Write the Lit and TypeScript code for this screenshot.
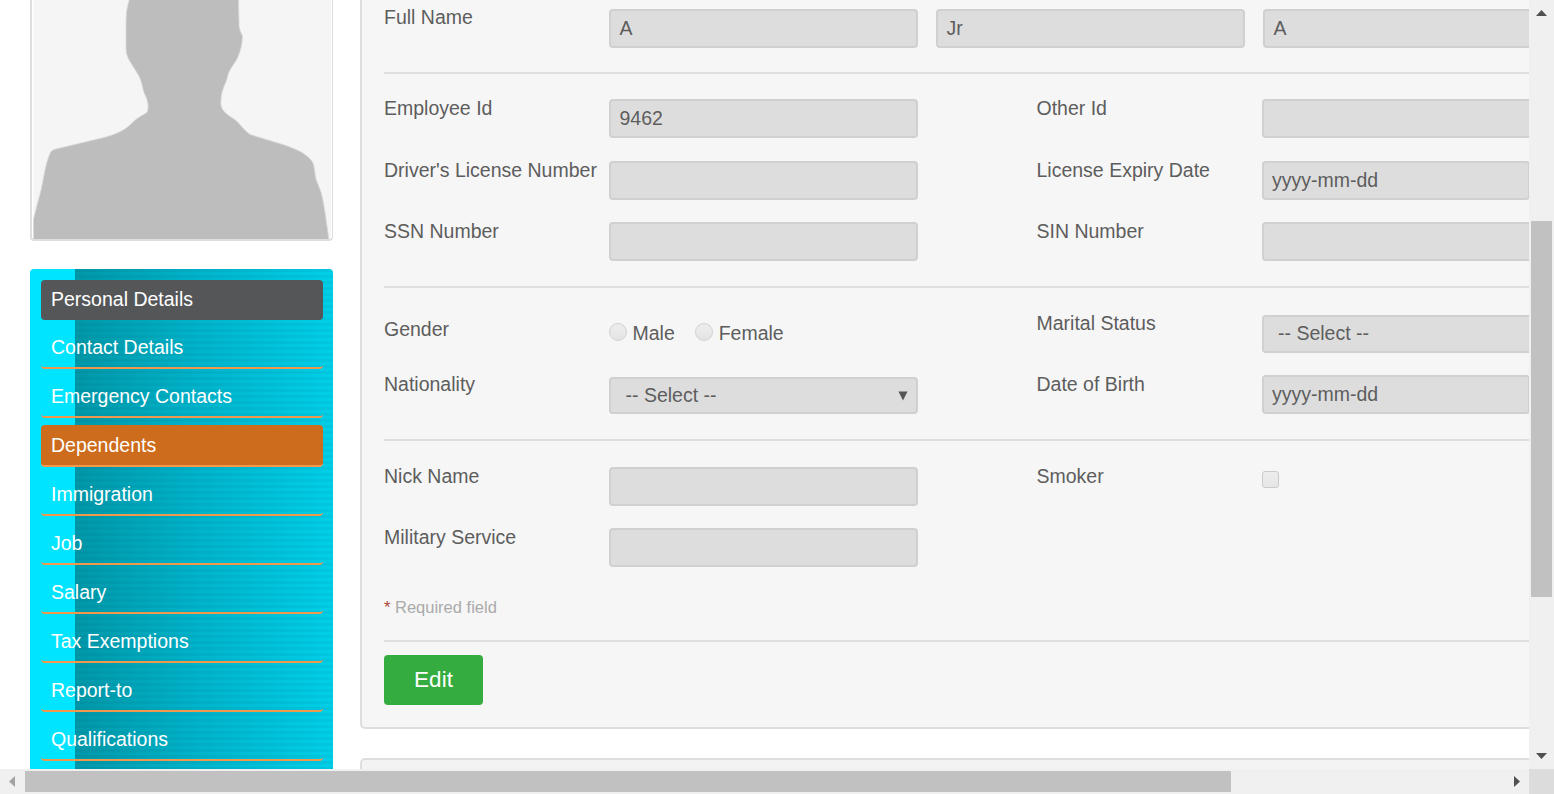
import { LitElement, html, css } from "lit";
import { customElement, property } from "lit/decorators.js";

@customElement("side-menu")
class SideMenu extends LitElement {
  @property({ type: Array }) items: string[] = [];
  static styles = css`
    :host {
      display: block; box-sizing: border-box; width: 303px; height: 600px; padding: 11px 10px 0 11px;
      border-radius: 4px 4px 0 0;
      background:
        linear-gradient(90deg, #00e4ff 45px, transparent 45px),
        repeating-linear-gradient(180deg, rgba(0, 60, 80, 0.06) 0 3px, transparent 3px 6px),
        linear-gradient(90deg, #0097a8 45px, #00b3ca 165px, #00cfe8 303px);
    }
    .item {
      box-sizing: border-box; height: 42px; margin-bottom: 7px; padding-left: 10px;
      font-size: 19.5px; line-height: 41px; color: #fff; border-radius: 4px;
      border-bottom: 2px solid #f0994d;
    }
    .active { height: 40px; line-height: 39px; background: #555658; border-bottom: none; }
    .hover { background: #cd6c1d; }
  `;
  render() {
    return this.items.map(
      (t) => html`<div class="item ${t === "Personal Details" ? "active" : t === "Dependents" ? "hover" : ""}">${t}</div>`,
    );
  }
}

@customElement("app-root")
class AppRoot extends LitElement {
  static styles = css`
    :host {
      display: grid; grid-template: 769px 25px / 1529px 25px; width: 1554px; height: 794px;
      overflow: hidden; background: #fff; color: #5d5d5d;
      font-family: "Liberation Sans", Arial, sans-serif; font-size: 19.5px; line-height: 22px;
    }
    .view { display: flex; gap: 27px; padding-left: 30px; overflow: hidden; }
    .side { width: 303px; flex: none; }
    .photo {
      box-sizing: border-box; height: 241px; margin-bottom: 28px; padding: 0 1px 0 1px;
      border: solid #dedede; border-width: 0 1px 2px 2px; border-radius: 0 0 4px 4px;
    }
    .photo svg { display: block; width: 299px; height: 239px; }
    .main { width: 1400px; flex: none; }
    .card {
      box-sizing: border-box; height: 729px; padding-left: 22px; background: #f6f6f6;
      border: 2px solid #dedede; border-top: 0; border-radius: 0 0 5px 5px;
    }
    .next { height: 60px; margin-top: 29px; background: #f3f3f3; border: 2px solid #dedede; border-radius: 5px; }
    .group { box-sizing: border-box; border-bottom: 2px solid #dedede; }
    .names { height: 74px; padding-top: 9px; }
    .ids { height: 214px; padding-top: 25px; }
    .bio { height: 153px; padding-top: 27px; }
    .extra { height: 201px; padding-top: 26px; }
    .row { display: grid; grid-template-columns: 225px 427.5px 225.5px 309px; align-items: start; }
    .names .row { grid-template-columns: 225px 309px 327px 327px; }
    .names .row > :nth-child(n + 3) { margin-left: 18px; }
    .lbl { margin-top: -2px; white-space: nowrap; }
    .lbl.low { margin-top: 3px; }
    .lbl.high { margin-top: -3px; }
    .field {
      box-sizing: border-box; width: 309px; height: 39px; padding-left: 8.5px; line-height: 35px;
      background: #ddd; border: 2px solid #d0d0d0; border-radius: 4px;
    }
    .short { width: 268px; padding-left: 8px; }
    .select {
      display: flex; justify-content: space-between; align-items: center; height: 38px;
      padding: 0 8px 0 14px; line-height: 32px;
    }
    .select span { margin-top: -2px; }
    .select svg { width: 10px; height: 10px; fill: #555; }
    .nat { height: 37px; margin-top: 2px; padding-left: 14.5px; }
    .nat span { margin-top: -1px; }
    .r62 { height: 62px; }
    .r61 { height: 61px; }
    .r60 { height: 60px; }
    .radios { display: flex; align-items: center; height: 22px; margin-top: 7px; }
    .dot {
      box-sizing: border-box; width: 18px; height: 18px; margin: -2px 5.5px 0 0; border: 1px solid #d2d2d2;
      border-radius: 50%; background: linear-gradient(#ededed, #e4e4e4);
    }
    .dot + span { margin-right: 20.4px; }
    .check {
      box-sizing: border-box; width: 17px; height: 17px; margin-top: 4px; border: 1px solid #cbcbcb;
      border-radius: 3px; background: linear-gradient(#ededed, #e6e6e6);
    }
    .required { margin-top: 7px; font-size: 16.5px; color: #aaa; }
    .star { color: #aa4935; }
    .edit {
      width: 99px; height: 50px; margin-top: 13px; border-radius: 4px; background: #34ac40; color: #fff;
      font-size: 22.5px; line-height: 49px; text-align: center;
    }
    .vbar, .hbar { display: flex; background: #f0f0f0; }
    .vbar { flex-direction: column; align-items: center; }
    .vthumb { width: 21px; height: 376px; margin: 205px 2px 0 2px; background: #c1c1c1; }
    .hthumb { width: 1206px; height: 21px; margin: 2px 283px 0 0; background: #c1c1c1; }
    .arrow { display: block; flex: none; fill: #505050; }
    .up { margin-top: 10px; }
    .down { margin-top: 156px; }
    .left { margin: 7px 10px 0 9px; fill: #a3a3a3; }
    .right { margin-top: 7px; }
    .corner { background: #dcdcdc; }
  `;

  private select(cls = "") {
    return html`<div class="field select ${cls}">
      <span>-- Select --</span><svg viewBox="0 0 10 10"><path d="M.5 .5H9.5L5 9.5Z" /></svg>
    </div>`;
  }

  render() {
    const items = ["Personal Details", "Contact Details", "Emergency Contacts", "Dependents", "Immigration", "Job",
      "Salary", "Tax Exemptions", "Report-to", "Qualifications"];
    return html`
      <div class="view">
        <div class="side">
          <div class="photo">
            <svg viewBox="33 0 299 239">
              <path fill="#f5f5f5" d="M33.500 0H331V239H33.500Z" />
              <path fill="#bdbdbd" stroke="#d9d9d9" stroke-width=".8" d="M130 -2C126 8 126 18 126 28V48C126 57 130 61 134 68L139 76C143 84 142 90 146 97C149 105 148 107 147.500 112C140 117 138 117 132 123C124 131 116 134 104 137.500L58 148.500C51 150 51 151 49 156C45 166 44 177 41 190L33.500 219V240H329C326 219 324 203 321 192L316 179C314 171 315 164 311 160C305 153 298 150 286 145.500L250 134.500C242 129 239 121 231 117C223 112 220 107 221 101C221 91 225 85 227 79C229 69 233 66 237 59C240 52 242 47 242.500 36C240 30 239 30 239 22L238.500 -2Z" />
            </svg>
          </div>
          <side-menu .items=${items}></side-menu>
        </div>
        <div class="main">
          <div class="card">
            <div class="group names">
              <div class="row"><span class="lbl high">Full Name</span><div class="field">A</div><div class="field">Jr</div><div class="field">A</div></div>
            </div>
            <div class="group ids">
              <div class="row r62"><span class="lbl">Employee Id</span><div class="field">9462</div><span class="lbl">Other Id</span><div class="field"></div></div>
              <div class="row r61"><span class="lbl">Driver's License Number</span><div class="field"></div><span class="lbl">License Expiry Date</span><div class="field short">yyyy-mm-dd</div></div>
              <div class="row"><span class="lbl">SSN Number</span><div class="field"></div><span class="lbl">SIN Number</span><div class="field"></div></div>
            </div>
            <div class="group bio">
              <div class="row r60">
                <span class="lbl low">Gender</span>
                <div class="radios"><i class="dot"></i><span>Male</span><i class="dot"></i><span>Female</span></div>
                <span class="lbl high">Marital Status</span>${this.select()}
              </div>
              <div class="row"><span class="lbl">Nationality</span>${this.select("nat")}<span class="lbl">Date of Birth</span><div class="field short">yyyy-mm-dd</div></div>
            </div>
            <div class="group extra">
              <div class="row r61"><span class="lbl">Nick Name</span><div class="field"></div><span class="lbl">Smoker</span><i class="check"></i></div>
              <div class="row r61"><span class="lbl">Military Service</span><div class="field"></div></div>
              <div class="required"><span class="star">*</span> Required field</div>
            </div>
            <div class="edit">Edit</div>
          </div>
          <div class="next"></div>
        </div>
      </div>
      <div class="vbar">
        <svg class="arrow up" width="11" height="6"><path d="M5.500 0L11 6H0Z" /></svg>
        <div class="vthumb"></div>
        <svg class="arrow down" width="11" height="6"><path d="M0 0H11L5.500 6Z" /></svg>
      </div>
      <div class="hbar">
        <svg class="arrow left" width="6" height="11"><path d="M6 0V11L0 5.500Z" /></svg>
        <div class="hthumb"></div>
        <svg class="arrow right" width="6" height="11"><path d="M0 0V11L6 5.500Z" /></svg>
      </div>
      <div class="corner"></div>
    `;
  }
}
